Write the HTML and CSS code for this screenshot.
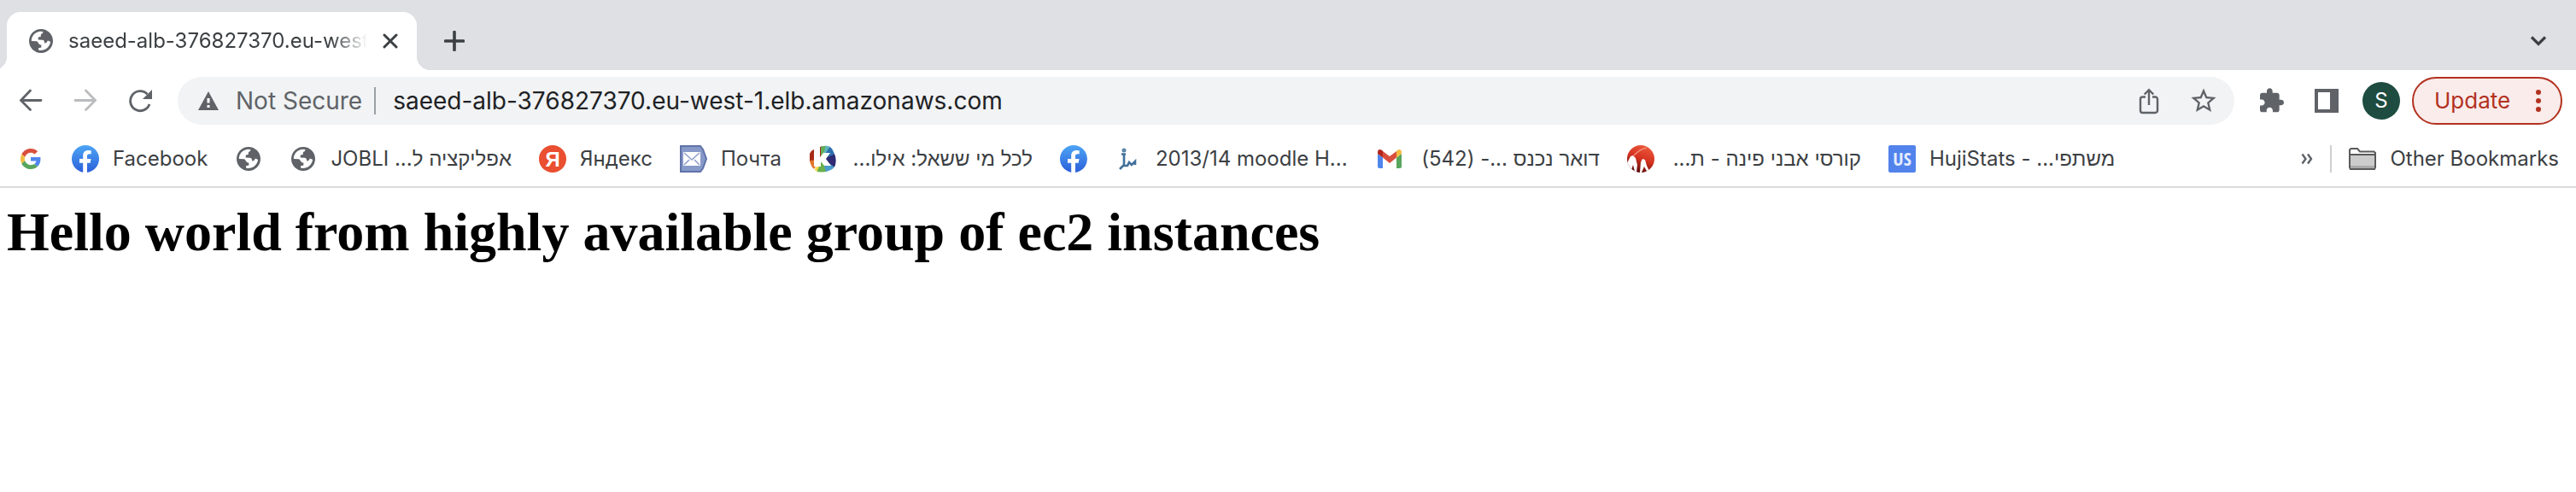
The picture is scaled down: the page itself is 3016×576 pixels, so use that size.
FILE: index.html
```html
<!DOCTYPE html>
<html lang="en">
<head>
<meta charset="utf-8">
<title>saeed-alb-376827370.eu-west-1.elb.amazonaws.com</title>
<link rel="stylesheet" href="styles.css">
</head>
<body>
<svg class="defs" width="0" height="0" aria-hidden="true">
  <defs>
    <linearGradient id="fb-fill" x1="0" y1="0" x2="0" y2="1"><stop offset="0" stop-color="#4da5f5"/><stop offset="1" stop-color="#2b5fd9"/></linearGradient>
    <linearGradient id="red-fill" x1="0.7" y1="0" x2="0.3" y2="1"><stop offset="0" stop-color="#ee5a3c"/><stop offset="0.5" stop-color="#d4311f"/><stop offset="1" stop-color="#4a0808"/></linearGradient>
    <clipPath id="k-clip"><path d="M1 10Q3 5 9 4Q16 0 22 1Q27 2 29 8Q33 15 31 23Q30 28 23 30Q14 33 8 30Q2 25 1 18Z"/></clipPath>
    <clipPath id="red-clip"><circle cx="16" cy="16" r="16"/></clipPath>
    <symbol id="globe" viewBox="2 2 20 20"><path fill="#5f6368" d="M12 2C6.480 2 2 6.480 2 12s4.480 10 10 10 10-4.480 10-10S17.520 2 12 2z"/><path fill="#fff" d="M4 12c0-4.200 3.200-7.500 7.200-7.950L13.800 4.200C13.500 5 13.700 5.500 12.700 6C11.500 6.600 11.900 7 11.900 8C11.900 8.600 9.700 8.300 9.700 9.300L9.600 11L13 11.100C14.600 11.100 14.900 12.200 15 13.700C16.600 13.600 17 13.200 17.200 12.200C18 11.400 18.700 12 19.900 12.800C19.300 17.400 15.400 20.300 10.700 19.900C9.900 19.700 9.800 18.900 9.900 17.900L12.300 17.400L12.200 15.300C9.600 15.300 9.700 12.500 8.300 12.200L4 12z"/></symbol>
    <symbol id="facebook" viewBox="0 0 32 32"><circle cx="16" cy="16" r="16" fill="url(#fb-fill)"/><path fill="#fff" d="M13.200 32V20.800H9V16h4.200v-3.700C13.200 8.200 15.500 6 19.200 6c1.700 0 3.500.3 3.500.3v4h-2c-2 0-2.700 1.200-2.700 2.500V16h4.500l-.8 4.800H18V32z"/></symbol>
  </defs>
</svg>

<header class="browser">
  <div class="tabstrip">
    <div class="tab">
      <svg class="icon-sm" aria-hidden="true"><use href="#globe"/></svg>
      <span class="tab-title">saeed-alb-376827370.eu-west-1.elb.amazonaws.com</span>
      <button class="btn" type="button" aria-label="Close tab"><svg width="18" height="18" viewBox="0 0 18 18"><path d="M2 2l14 14M16 2L2 16" stroke="#3c4043" stroke-width="3" stroke-linecap="round"/></svg></button>
    </div>
    <button class="btn new-tab" type="button" aria-label="New tab"><svg width="24" height="24" viewBox="0 0 24 24"><path d="M12 1.500v21M1.500 12h21" stroke="#3c4043" stroke-width="3.600" stroke-linecap="round"/></svg></button>
    <button class="btn tab-search" type="button" aria-label="Search tabs"><svg width="20" height="14" viewBox="0 0 20 14"><path d="M2 2.500l8 8 8-8" fill="none" stroke="#3c4043" stroke-width="3.200"/></svg></button>
  </div>

  <div class="toolbar">
    <nav class="nav-buttons">
      <button class="btn" type="button" aria-label="Back"><svg width="28" height="28" viewBox="0 0 28 28"><path d="M26 13.500H3M13.500 2L2.500 13.500l11 11" fill="none" stroke="#5f6368" stroke-width="2.800" stroke-linecap="round"/></svg></button>
      <button class="btn" type="button" aria-label="Forward"><svg width="28" height="28" viewBox="0 0 28 28"><path d="M2 13.500h23M14.500 2l11 11.500-11 11" fill="none" stroke="#babcbe" stroke-width="2.800" stroke-linecap="round"/></svg></button>
      <button class="btn" type="button" aria-label="Reload"><svg width="28" height="28" viewBox="0 0 28 28"><path d="M25 18A11.500 11.500 0 1 1 22.500 6.300" fill="none" stroke="#5f6368" stroke-width="2.800"/><path d="M28 1v11H17z" fill="#5f6368"/></svg></button>
    </nav>
    <div class="omnibox">
      <svg width="24" height="22" viewBox="0 0 24 22" aria-hidden="true"><path d="M12 0l12 22H0z" fill="#5f6368"/><path d="M10.500 8h3v5.500h-3zM10.500 16h3v3h-3z" fill="#fff"/></svg>
      <label class="security" for="url">Not Secure</label>
      <input class="url" id="url" type="text" value="saeed-alb-376827370.eu-west-1.elb.amazonaws.com">
      <button class="btn" type="button" aria-label="Share"><svg width="32" height="32" viewBox="0 0 32 32"><path d="M12 11.500H8.500a2.500 2.500 0 0 0-2.500 2.500v13.500a2.500 2.500 0 0 0 2.500 2.500h15a2.500 2.500 0 0 0 2.500-2.500V14a2.500 2.500 0 0 0-2.500-2.500H20M16 21V3.500M10.700 8.500L16 3.200l5.300 5.300" fill="none" stroke="#5f6368" stroke-width="2.400"/></svg></button>
      <button class="btn" type="button" aria-label="Bookmark this tab"><svg width="32" height="32" viewBox="1 1 22 22"><path fill="#5f6368" d="M22 9.240l-7.190-.62L12 2 9.190 8.630 2 9.240l5.460 4.730L5.820 21 12 17.270 18.180 21l-1.630-7.030L22 9.240zM12 15.400l-3.760 2.270 1-4.280-3.320-2.880 4.380-.38L12 6.100l1.710 4.040 4.380.38-3.320 2.880 1 4.280L12 15.400z"/></svg></button>
    </div>
    <div class="actions">
      <button class="btn" type="button" aria-label="Extensions"><svg width="32" height="32" viewBox="2 0 24 24"><path fill="#5f6368" d="M20.500 11H19V7c0-1.100-.9-2-2-2h-4V3.500C13 2.120 11.880 1 10.500 1S8 2.120 8 3.500V5H4c-1.100 0-1.990.9-1.990 2v3.800H3.500c1.490 0 2.700 1.210 2.700 2.700s-1.210 2.700-2.700 2.700H2V20c0 1.100.9 2 2 2h3.800v-1.500c0-1.490 1.210-2.700 2.700-2.700 1.490 0 2.700 1.210 2.700 2.700V22H17c1.100 0 2-.9 2-2v-4h1.500c1.380 0 2.500-1.120 2.500-2.500S21.880 11 20.500 11z"/></svg></button>
      <button class="btn" type="button" aria-label="Side panel"><svg width="28" height="28" viewBox="0 0 28 28"><path fill="#5f6368" fill-rule="evenodd" d="M0 0h28v28H0zM4 4v20h14V4z"/></svg></button>
      <button class="avatar" type="button" aria-label="Profile S">S</button>
    </div>
    <button class="update" type="button">Update<svg width="6" height="28" viewBox="0 0 6 28" aria-hidden="true"><g fill="#b3311f"><circle cx="3" cy="4" r="3"/><circle cx="3" cy="14" r="3"/><circle cx="3" cy="24" r="3"/></g></svg></button>
  </div>

  <nav class="bookmarks">
    <a class="bookmark" href="#" aria-label="Google"><svg class="icon" viewBox="-8 -8 64 64"><path fill="#d94f3d" d="M24 9.500c3.540 0 6.710 1.220 9.210 3.600l6.850-6.850C35.900 2.380 30.470 0 24 0 14.620 0 6.510 5.380 2.560 13.220l7.980 6.190C12.430 13.720 17.740 9.500 24 9.500z"/><path fill="#4f86ec" d="M46.980 24.550c0-1.570-.15-3.090-.38-4.550H24v9.020h12.940c-.58 2.960-2.260 5.480-4.780 7.180l7.730 6c4.510-4.180 7.090-10.360 7.090-17.650z"/><path fill="#f2bd42" d="M10.530 28.590c-.48-1.450-.76-2.990-.76-4.590s.27-3.140.76-4.590l-7.980-6.190C.92 16.460 0 20.120 0 24s.92 7.540 2.560 10.780z"/><path fill="#58a55c" d="M24 48c6.480 0 11.930-2.130 15.890-5.810l-7.730-6c-2.150 1.450-4.920 2.300-8.160 2.300-6.260 0-11.570-4.220-13.470-9.910l-7.980 6.190C6.510 42.620 14.620 48 24 48z"/></svg></a>
    <a class="bookmark" href="#"><svg class="icon" aria-hidden="true"><use href="#facebook"/></svg><span>Facebook</span></a>
    <a class="bookmark" href="#" aria-label="Site"><svg class="icon globe"><use href="#globe"/></svg></a>
    <a class="bookmark" href="#"><svg class="icon globe" aria-hidden="true"><use href="#globe"/></svg><span>JOBLI &rlm;אפליקציה ל...&rlm;</span></a>
    <a class="bookmark" href="#"><svg class="icon" viewBox="0 0 32 32" aria-hidden="true"><circle cx="16" cy="16" r="16" fill="#e94f30"/><text class="ya" x="16" y="25" text-anchor="middle">Я</text></svg><span>Яндекс</span></a>
    <a class="bookmark" href="#"><svg class="icon" viewBox="0 0 32 32" aria-hidden="true"><path d="M1 1h23l3 4 4 11-4 11-3 4H1z" fill="#8799c8" stroke="#5f73a8" stroke-width="2"/><path d="M4 8h20v16H4z" fill="#fff"/><path d="M5 9l9 8 9-8M5 23l6-6M23 23l-6-6" fill="none" stroke="#8fa0cc" stroke-width="1.600"/></svg><span>Почта</span></a>
    <a class="bookmark" href="#"><svg class="icon" viewBox="0 0 32 32" aria-hidden="true"><g clip-path="url(#k-clip)"><path fill="#a62c17" d="M0 0h16v16L0 20z"/><path fill="#e2762b" d="M0 18l16-2L4 30H0z"/><path fill="#f5d84a" d="M16 16L4 32h7z"/><path fill="#6ab04c" d="M16 16L9 32h14z"/><path fill="#4a9ccb" d="M16 16l4 16 12-6z"/><path fill="#2f2a72" d="M16 16l16 11V8z"/><path fill="#2f6fad" d="M16 16l16-6V0h-8z"/><path fill="#62ad58" d="M14 16V0h8z"/><path fill="#5cb6bd" d="M16 14L20 0h6z"/></g><path fill="#fff" d="M6 2h7v12l4-5h8l-5 7 6 8h-8l-4-5v6H6z"/></svg><span class="label-md" dir="rtl">לכל מי ששאל: אילו...</span></a>
    <a class="bookmark" href="#" aria-label="Facebook"><svg class="icon"><use href="#facebook"/></svg></a>
    <a class="bookmark" href="#"><svg class="icon" viewBox="0 0 32 32" aria-hidden="true"><circle cx="11" cy="6" r="2.500" fill="#5b87ab"/><path d="M8 10.500h5M11 10v13l-5 5M10 24h5l2-4 3 3 4-4v4" fill="none" stroke="#41719b" stroke-width="2.600"/></svg><span class="label-lg">2013/14 moodle H...</span></a>
    <a class="bookmark" href="#"><svg class="icon" viewBox="0 0 32 32" aria-hidden="true"><path fill="#4f86ec" d="M2 10l6 4.500V27H4a2 2 0 0 1-2-2z"/><path fill="#58a55c" d="M30 10l-6 4.500V27h4a2 2 0 0 0 2-2z"/><path fill="#d94f3d" d="M8 7l8 6 8-6v7.500l-8 6.500-8-6.500z"/><path fill="#b3261e" d="M2 8c0-3 3-4 5-2l1 .8v7.700L2 10z"/><path fill="#f2bd42" d="M30 8c0-3-3-4-5-2l-1 .8v7.700L30 10z"/></svg><span class="label-md" dir="rtl">דואר נכנס ...- (542)</span></a>
    <a class="bookmark" href="#"><svg class="icon" viewBox="0 0 32 32" aria-hidden="true"><g clip-path="url(#red-clip)"><path fill="url(#red-fill)" d="M0 0h32v32H0z"/><path d="M8 12q6-7 15-9" fill="none" stroke="#f08a74" stroke-width="1.500"/><path fill="#fff" d="M0 32V21l4-8 3-1 3 3 2 8-1 9-2-1-2-8-3 9zM15 32l1-12 2-4 3 1 2 7 4 8-3 0-4-7-3 7z"/></g></svg><span class="label-lg" dir="rtl">קורסי אבני פינה - ת...</span></a>
    <a class="bookmark" href="#"><svg class="icon" viewBox="0 0 32 32" aria-hidden="true"><rect width="32" height="32" rx="2" fill="#5283ec"/><text class="us" x="16" y="24" text-anchor="middle">US</text></svg><span>HujiStats - &rlm;משתפי...&rlm;</span></a>
    <div class="bookmarks-end">
      <button class="btn" type="button" aria-label="More bookmarks"><svg width="14" height="14" viewBox="0 0 14 14"><path d="M1.500 1.500l4 5.500-4 5.500M8 1.500l4 5.500-4 5.500" fill="none" stroke="#5f6368" stroke-width="2.400"/></svg></button>
      <a class="bookmark other" href="#"><svg class="icon" viewBox="0 0 32 32" aria-hidden="true"><path d="M1 26V5.500L2.500 4H10l3 3.500h16.500L31 9v17l-1 2H2z" fill="#fff" stroke="#5a5a5a" stroke-width="2"/><path d="M2 12h28v12H2z" fill="#ccc"/><path d="M2 24h28v3H2z" fill="#aaa"/><path d="M1 11h30M1 28h30" stroke="#5a5a5a" stroke-width="2"/></svg><span>Other Bookmarks</span></a>
    </div>
  </nav>
</header>

<main class="page">
  <h1>Hello world from highly available group of ec2 instances</h1>
</main>
</body>
</html>
```
FILE: styles.css
```css
* {
  box-sizing: border-box;
}

body {
  margin: 0;
  background: #fff;
  color: #3c4043;
  font-family: Inter, "Liberation Sans", sans-serif;
  font-size: 24px;
  line-height: 32px;
}

svg {
  display: block;
  flex: none;
}

.defs {
  position: absolute;
}

.btn {
  display: flex;
  flex: none;
  padding: 0;
  border: 0;
  background: none;
}

.icon {
  width: 32px;
  height: 32px;
}

.icon-sm {
  width: 28px;
  height: 28px;
}

.globe {
  padding: 2px;
}

/* Tab strip */
.tabstrip {
  display: flex;
  align-items: center;
  padding: 14px 34px 0 8px;
  background: #dee0e4;
}

.tab {
  position: relative;
  display: flex;
  align-items: center;
  width: 480px;
  height: 68px;
  padding: 0 22px 0 26px;
  border-radius: 16px 16px 0 0;
  background: #fff;
}

.tab::before,
.tab::after {
  content: "";
  position: absolute;
  bottom: 0;
  width: 16px;
  height: 16px;
}

.tab::before {
  right: 100%;
  background: radial-gradient(circle at 0 0, transparent 16px, #fff 16px);
}

.tab::after {
  left: 100%;
  background: radial-gradient(circle at 100% 0, transparent 16px, #fff 16px);
}

.tab-title {
  flex: 1;
  min-width: 0;
  margin: 0 18px;
  overflow: hidden;
  white-space: nowrap;
  -webkit-mask-image: linear-gradient(to right, #000 88%, transparent);
  mask-image: linear-gradient(to right, #000 88%, transparent);
}

.new-tab {
  margin-left: 32px;
}

.tab-search {
  margin-left: auto;
}

/* Toolbar */
.toolbar {
  display: flex;
  align-items: center;
  padding: 8px 16px 8px 22px;
}

.nav-buttons {
  display: flex;
  gap: 36px;
}

.omnibox {
  display: flex;
  flex: 1;
  align-items: center;
  gap: 20px;
  height: 56px;
  margin: 0 30px;
  padding: 0 20px 0 24px;
  border-radius: 28px;
  background: #f1f3f4;
  font-size: 28px;
}

.omnibox .btn + .btn {
  margin-left: 12px;
}

.security {
  padding-right: 14px;
  border-right: 2px solid #9aa0a6;
  color: #5f6368;
}

.url {
  flex: 1;
  min-width: 0;
  padding: 0;
  border: 0;
  outline: 0;
  background: none;
  color: #202124;
  font: inherit;
}

.actions {
  display: flex;
  align-items: center;
  gap: 32px;
}

.avatar {
  width: 44px;
  height: 44px;
  margin-left: -4px;
  padding: 0;
  border: 0;
  border-radius: 50%;
  background: #1e4c40;
  color: #fff;
  font: inherit;
}

.update {
  display: flex;
  align-items: center;
  justify-content: space-between;
  width: 176px;
  height: 56px;
  margin-left: 14px;
  padding: 0 23px 0 24px;
  border: 2px solid #b3311f;
  border-radius: 28px;
  background: #f9eceb;
  color: #b3311f;
  font: inherit;
  font-size: 26px;
}

/* Bookmarks bar */
.bookmarks {
  display: flex;
  align-items: center;
  gap: 32px;
  padding: 16px 20px;
  border-bottom: 2px solid #dadbdc;
}

.bookmark {
  display: flex;
  flex: none;
  align-items: center;
  gap: 16px;
  color: inherit;
  text-decoration: none;
  white-space: nowrap;
}

.label-md {
  min-width: 214px;
}

.label-lg {
  min-width: 226px;
}

.bookmarks-end {
  display: flex;
  align-items: center;
  gap: 20px;
  margin-left: auto;
}

.other {
  padding-left: 20px;
  border-left: 2px solid #cfcfcf;
}

.ya {
  fill: #fff;
  font: bold 24px "Liberation Sans", sans-serif;
}

.us {
  fill: #e3ecff;
  font: 22px "Liberation Sans Narrow", "Open Sans Condensed", Roboto, sans-serif;
}

/* Page */
.page {
  padding: 16px 8px;
}

.page h1 {
  margin: 0;
  color: #000;
  font: bold 64px/72px "Liberation Serif", serif;
}
```
